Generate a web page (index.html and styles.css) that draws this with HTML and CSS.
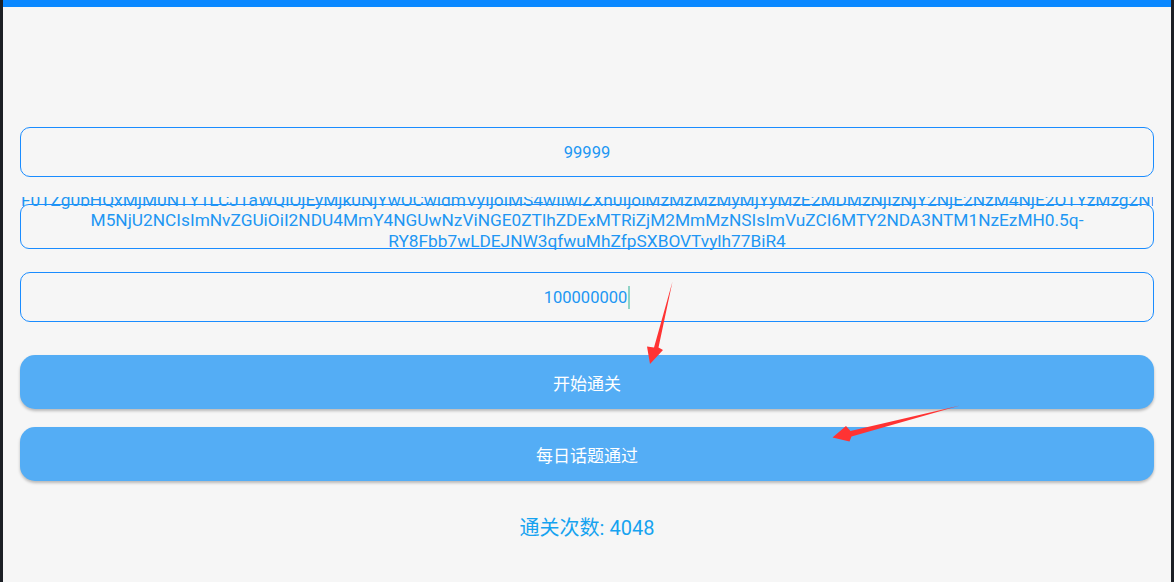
FILE: index.html
```html
<!DOCTYPE html>
<html lang="zh-CN">
<head>
<meta charset="utf-8">
<title>通关</title>
<link rel="stylesheet" href="styles.css">
</head>
<body>
<div class="frame">
  <div class="edge"></div>
  <div class="app">
    <div class="topbar"></div>
    <div class="content">
      <div class="field field-thick"><span class="val">99999</span></div>
      <div class="jwt-clip">
        <div class="jwt-box">
          <div class="jwt-text">
            <div class="jwt-line jwt-first">F0TZg0bHQxMjM0NTY1LCJ1aWQiOjEyMjk0NjYwOCwidmVyIjoiMS4wIiwiZXh0IjoiMzMzMzMyMjYyMzE2MDMzNjIzNjY2NjE2NzM4NjE2OTYzMzg2NDY1NjIzMjIzNjY2NjE2NzM4</div>
            <div class="jwt-line">M5NjU2NCIsImNvZGUiOiI2NDU4MmY4NGUwNzViNGE0ZTlhZDExMTRiZjM2MmMzNSIsImVuZCI6MTY2NDA3NTM1NzEzMH0.5q-</div>
            <div class="jwt-line">RY8Fbb7wLDEJNW3qfwuMhZfpSXBOVTvylh77BiR4</div>
          </div>
        </div>
      </div>
      <div class="field field-3"><span class="val">100000000</span><span class="caret"></span></div>
      <div class="btn btn-first">开始通关</div>
      <div class="btn btn-second">每日话题通过</div>
      <div class="counter">通关次数: 4048</div>
    </div>
  </div>
  <div class="edge"></div>
</div>
<svg class="arrows" width="1174" height="582" viewBox="0 0 1174 582">
  <polygon points="672.5,281.5 658.5,347.5 663,350 650,364 647,346.5 654,347.5" fill="#ff3333"/>
  <polygon points="960,405.5 850.5,431 846,426 832.5,437.5 849.5,441.5 851.5,436.5" fill="#ff3333"/>
</svg>
</body>
</html>
```

FILE: styles.css
```css
html, body {
  margin: 0;
  padding: 0;
}
body {
  width: 1174px;
  height: 582px;
  overflow: hidden;
  background: #f6f6f6;
  font-family: Roboto, "Noto Sans CJK SC", sans-serif;
  position: relative;
}
.frame {
  display: flex;
  height: 582px;
}
.edge {
  width: 3px;
  background: #1c1f25;
  flex: none;
}
.app {
  flex: 1;
  min-width: 0;
  overflow: hidden;
  display: flex;
  flex-direction: column;
  background: #f6f6f6;
}
.topbar {
  height: 7px;
  background: #0a88ff;
}
.content {
  padding: 120px 17px 0 17px;
  display: flex;
  flex-direction: column;
  min-width: 0;
}
.field {
  box-sizing: border-box;
  height: 50px;
  border: 1.5px solid #1a8cff;
  border-radius: 10px;
  display: flex;
  align-items: center;
  justify-content: center;
  color: #2196f3;
  font-size: 16.5px;
}
.field-3 {
  margin-top: 22px;
}
.caret {
  display: inline-block;
  width: 2px;
  height: 23px;
  background: #8fd3c6;
  margin-left: 1px;
}
.jwt-clip {
  margin-top: 20px;
  height: 53px;
  padding-top: 7px;
  box-sizing: border-box;
  overflow: hidden;
  min-width: 0;
}
.jwt-box {
  box-sizing: border-box;
  height: 45px;
  border: 1.5px solid #1a8cff;
  border-radius: 9px;
}
.jwt-text {
  margin-top: -15.5px;
  color: #2196f3;
  font-size: 17.3px;
  line-height: 20.5px;
}
.jwt-line {
  text-align: center;
  white-space: nowrap;
}
.jwt-first {
  overflow: hidden;
  text-align: left;
}
.btn {
  height: 54px;
  border-radius: 15px;
  background: #54adf5;
  color: #ffffff;
  font-size: 17px;
  display: flex;
  align-items: center;
  justify-content: center;
  box-shadow: 0 2px 3px rgba(0, 0, 0, 0.25);
}
.btn-first {
  margin-top: 33px;
}
.btn-second {
  margin-top: 18px;
}
.counter {
  margin-top: 35px;
  line-height: 24px;
  font-size: 20px;
  color: #16a3f0;
  text-align: center;
}
.arrows {
  position: absolute;
  left: 0;
  top: 0;
  pointer-events: none;
}
```
